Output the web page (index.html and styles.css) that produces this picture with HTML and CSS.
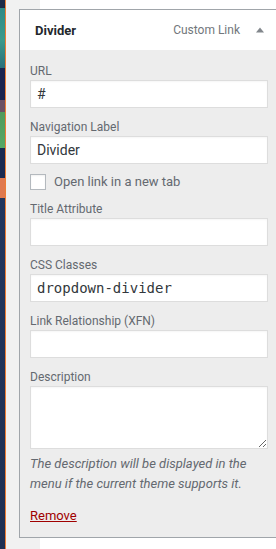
FILE: index.html
```html
<!DOCTYPE html>
<html lang="en">
<head>
<meta charset="utf-8">
<title>Menu item: Divider</title>
<link rel="stylesheet" href="styles.css">
</head>
<body>
<div class="screen">
  <div class="rail"></div>
  <div class="rail-edge"></div>
  <div class="canvas">
    <div class="menu-item">
      <div class="item-bar">
        <span class="item-title">Divider</span>
        <span class="item-controls">
          <span class="item-type">Custom Link</span>
          <svg class="item-toggle" width="10" height="6" viewBox="0 0 10 6" aria-hidden="true"><polygon points="5,0.5 9,5.5 1,5.5" fill="#82878c"/></svg>
        </span>
      </div>
      <div class="item-settings">
        <div class="field">
          <label class="field-label" for="url">URL</label>
          <input class="text-input" id="url" type="text" value="#">
        </div>
        <div class="field">
          <label class="field-label" for="navlabel">Navigation Label</label>
          <input class="text-input" id="navlabel" type="text" value="Divider">
        </div>
        <div class="check-row">
          <input class="check" id="newtab" type="checkbox">
          <label class="check-label" for="newtab">Open link in a new tab</label>
        </div>
        <div class="field">
          <label class="field-label" for="title">Title Attribute</label>
          <input class="text-input" id="title" type="text" value="">
        </div>
        <div class="field">
          <label class="field-label" for="classes">CSS Classes</label>
          <input class="text-input mono" id="classes" type="text" value="dropdown-divider">
        </div>
        <div class="field">
          <label class="field-label" for="xfn">Link Relationship (XFN)</label>
          <input class="text-input" id="xfn" type="text" value="">
        </div>
        <div class="field field-last">
          <label class="field-label" for="desc">Description</label>
          <textarea class="text-area" id="desc"></textarea>
        </div>
        <p class="help">The description will be displayed in the menu if the current theme supports it.</p>
        <a class="remove" href="#">Remove</a>
      </div>
    </div>
  </div>
</div>
</body>
</html>
```

FILE: styles.css
```css
html, body {
  margin: 0;
  padding: 0;
  overflow: hidden;
}

body {
  font-family: Roboto, "Liberation Sans", sans-serif;
  background: #f1f1f1;
}

.screen {
  display: flex;
  height: 549px;
}

.rail {
  width: 5px;
  flex-shrink: 0;
  background: linear-gradient(to bottom,
    #1d2b47 0px, #1d2b47 8px,
    #2f8a86 8px, #3a9a8c 40px, #2b6f7a 68px,
    #1b2550 68px, #1b2550 100px,
    #6b4f63 100px, #6b4f63 112px,
    #4f9a5c 112px, #57a866 148px,
    #1a2a52 148px, #1a2a52 178px,
    #e0794f 178px, #e0794f 198px,
    #22365e 198px, #1f2f52 549px);
}

.rail-edge {
  width: 1px;
  flex-shrink: 0;
  background: #ee7d36;
}

.canvas {
  flex: 1;
  min-width: 0;
  padding-top: 9px;
  background: linear-gradient(to right, #f1f1f1 34px, #ffffff 34px);
}

.menu-item {
  box-sizing: border-box;
  width: 260px;
  margin-left: 13px;
  border: 1px solid #a0a5aa;
  background: #ededed;
}

.item-bar {
  height: 40px;
  display: flex;
  align-items: center;
  justify-content: space-between;
  padding: 0 13px 0 15px;
  background: #ffffff;
}

.item-title {
  font-size: 13px;
  font-weight: 700;
  color: #23282d;
}

.item-controls {
  display: flex;
  align-items: center;
  gap: 15px;
}

.item-type {
  font-size: 12px;
  color: #72777c;
}

.item-toggle {
  display: block;
}

.item-settings {
  padding: 12px 10px 12px 10px;
}

.field {
  margin-bottom: 10px;
}

.field-last {
  margin-bottom: 0;
}

.field-label {
  display: block;
  font-size: 12px;
  line-height: 18px;
  color: #646970;
}

.text-input,
.text-area {
  display: block;
  box-sizing: border-box;
  width: 100%;
  margin: 0;
  border: 1px solid #dddddd;
  border-radius: 0;
  background: #ffffff;
  box-shadow: inset 0 1px 2px rgba(0, 0, 0, 0.04);
  color: #32373c;
  font-family: Roboto, "Liberation Sans", sans-serif;
  font-size: 14px;
  outline: none;
}

.text-input {
  height: 28px;
  padding: 0 6px;
}

.mono {
  font-family: "DejaVu Sans Mono", "Liberation Mono", monospace;
  font-size: 14px;
}

.text-area {
  height: 63px;
  padding: 4px 6px;
  resize: both;
}

.check-row {
  display: flex;
  align-items: center;
  gap: 8px;
  height: 16px;
  margin-bottom: 10px;
}

.check {
  appearance: none;
  -webkit-appearance: none;
  box-sizing: border-box;
  width: 16px;
  height: 16px;
  margin: 0;
  border: 1px solid #b4b9be;
  background: #ffffff;
  box-shadow: inset 0 1px 2px rgba(0, 0, 0, 0.06);
}

.check-label {
  font-size: 13px;
  line-height: 16px;
  color: #646970;
}

.help {
  margin: 5px 0 0 0;
  font-size: 13px;
  line-height: 20px;
  font-style: italic;
  color: #646970;
}

.remove {
  display: inline-block;
  margin-top: 13px;
  font-size: 13px;
  line-height: 18px;
  color: #a00000;
  text-decoration: underline;
}
```
